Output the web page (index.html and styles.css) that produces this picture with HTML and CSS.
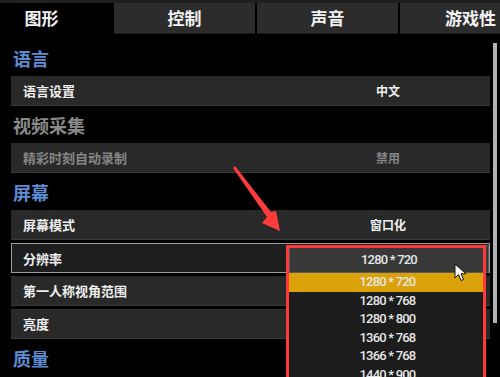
FILE: index.html
```html
<!DOCTYPE html>
<html lang="zh-CN">
<head>
  <meta charset="UTF-8">
  <title>设置 - 图形</title>
  <link rel="stylesheet" href="styles.css">
</head>
<body>
  <div class="topline"></div>
  <div class="tabs">
    <div class="tab active">图形</div>
    <div class="tab">控制</div>
    <div class="tab">声音</div>
    <div class="tab">游戏性</div>
  </div>

  <div class="main">
    <div class="settings">
      <h2 class="section">语言</h2>
      <div class="row">
        <span class="label">语言设置</span>
        <span class="value">中文</span>
      </div>

      <h2 class="section muted">视频采集</h2>
      <div class="row disabled">
        <span class="label">精彩时刻自动录制</span>
        <span class="value">禁用</span>
      </div>

      <h2 class="section">屏幕</h2>
      <div class="row">
        <span class="label">屏幕模式</span>
        <span class="value">窗口化</span>
      </div>
      <div class="row selected">
        <span class="label">分辨率</span>
        <div class="dropdown">
          <div class="dropdown-current">1280 * 720</div>
          <ul class="dropdown-list">
            <li class="picked">1280 * 720</li>
            <li>1280 * 768</li>
            <li>1280 * 800</li>
            <li>1360 * 768</li>
            <li>1366 * 768</li>
            <li>1440 * 900</li>
          </ul>
        </div>
      </div>
      <div class="row">
        <span class="label">第一人称视角范围</span>
      </div>
      <div class="row">
        <span class="label">亮度</span>
      </div>

      <h2 class="section">质量</h2>
    </div>
    <div class="scrollbar"></div>
  </div>

  <!-- annotation: red frame + arrow -->
  <div class="mark-box"></div>
  <svg class="mark-arrow" width="500" height="377" viewBox="0 0 500 377">
    <polygon points="233,168 235,166 271,212 276,211 280,231 262,223 267,217" fill="#ff3b3b"/>
  </svg>

  <svg class="cursor" width="14" height="20" viewBox="0 0 14 20">
    <path d="M1 1 L1 15 L4.5 11.5 L7 17.5 L9.5 16.5 L7 10.8 L12 10.8 Z" fill="#fff" stroke="#111" stroke-width="1" stroke-linejoin="round"/>
  </svg>
</body>
</html>
```

FILE: styles.css
```css
body {
  margin: 0;
  width: 500px;
  height: 377px;
  overflow: hidden;
  background: #000;
  font-family: "Noto Sans CJK SC", "Noto Sans", sans-serif;
  color: #eee;
  position: relative;
}
.topline {
  height: 3px;
  background: #1f1f1f;
}
.tabs {
  display: flex;
  gap: 2px;
  margin-left: -29px;
}
.tab {
  flex: 0 0 141px;
  height: 30px;
  line-height: 30px;
  text-align: center;
  font-size: 17px;
  font-weight: bold;
  color: #f2f2f2;
  background: #2c2c2c;
  border-bottom: 1px solid #1a1a1a;
}
.tab.active {
  background: #000;
  border-bottom-color: #000;
}

.main {
  display: flex;
}
.settings {
  width: 479px;
  margin-left: 11px;
  padding-top: 6px;
}
.scrollbar {
  width: 4px;
  height: 280px;
  margin-top: 9px;
  margin-left: 3px;
  background: #b3b3b3;
}

.section {
  margin: 0;
  height: 37px;
  box-sizing: border-box;
  padding: 6px 0 5px 2px;
  line-height: 26px;
  font-size: 18px;
  font-weight: bold;
  color: #5a8dd2;
}
.section:first-child {
  height: 36px;
  padding-top: 5px;
}
.section.muted {
  color: #8a8a8a;
}

.row {
  position: relative;
  display: grid;
  grid-template-columns: 1fr 204px;
  align-items: center;
  height: 30px;
  box-sizing: border-box;
  margin-top: 3px;
  padding-left: 12px;
  background: #292929;
  border-bottom: 1px solid #3a3a3a;
  font-size: 13px;
  font-weight: bold;
}
.section + .row {
  margin-top: 0;
}
.row .value {
  text-align: center;
  font-size: 12px;
}
.row.disabled {
  color: #858585;
}
.row.selected {
  background: #1e1e1e;
  border: 1px solid #9c9c9c;
  padding-left: 11px;
}

.dropdown {
  position: absolute;
  left: 277px;
  top: 1px;
  width: 200px;
  z-index: 2;
  font-family: "Roboto", sans-serif;
  font-weight: 500;
  font-size: 13px;
  letter-spacing: -0.8px;
  color: #e6e6e6;
}
.dropdown-current {
  height: 28px;
  line-height: 27px;
  text-align: center;
  background: #383838;
  border: 1px solid #5a5a5a;
  box-sizing: border-box;
}
.dropdown-list {
  list-style: none;
  margin: 0;
  padding: 0;
  width: 197px;
  background: #1c1c1c;
}
.dropdown-list li {
  height: 18.6px;
  line-height: 18.6px;
  text-align: center;
}
.dropdown-list li.picked {
  background: #dba10b;
}

.mark-box {
  position: absolute;
  left: 286px;
  top: 245px;
  width: 194px;
  height: 140px;
  border: 3px solid #ff3838;
  z-index: 3;
}
.mark-arrow {
  position: absolute;
  left: 0;
  top: 0;
  z-index: 3;
}
.cursor {
  position: absolute;
  left: 454px;
  top: 263px;
  z-index: 4;
}
```
